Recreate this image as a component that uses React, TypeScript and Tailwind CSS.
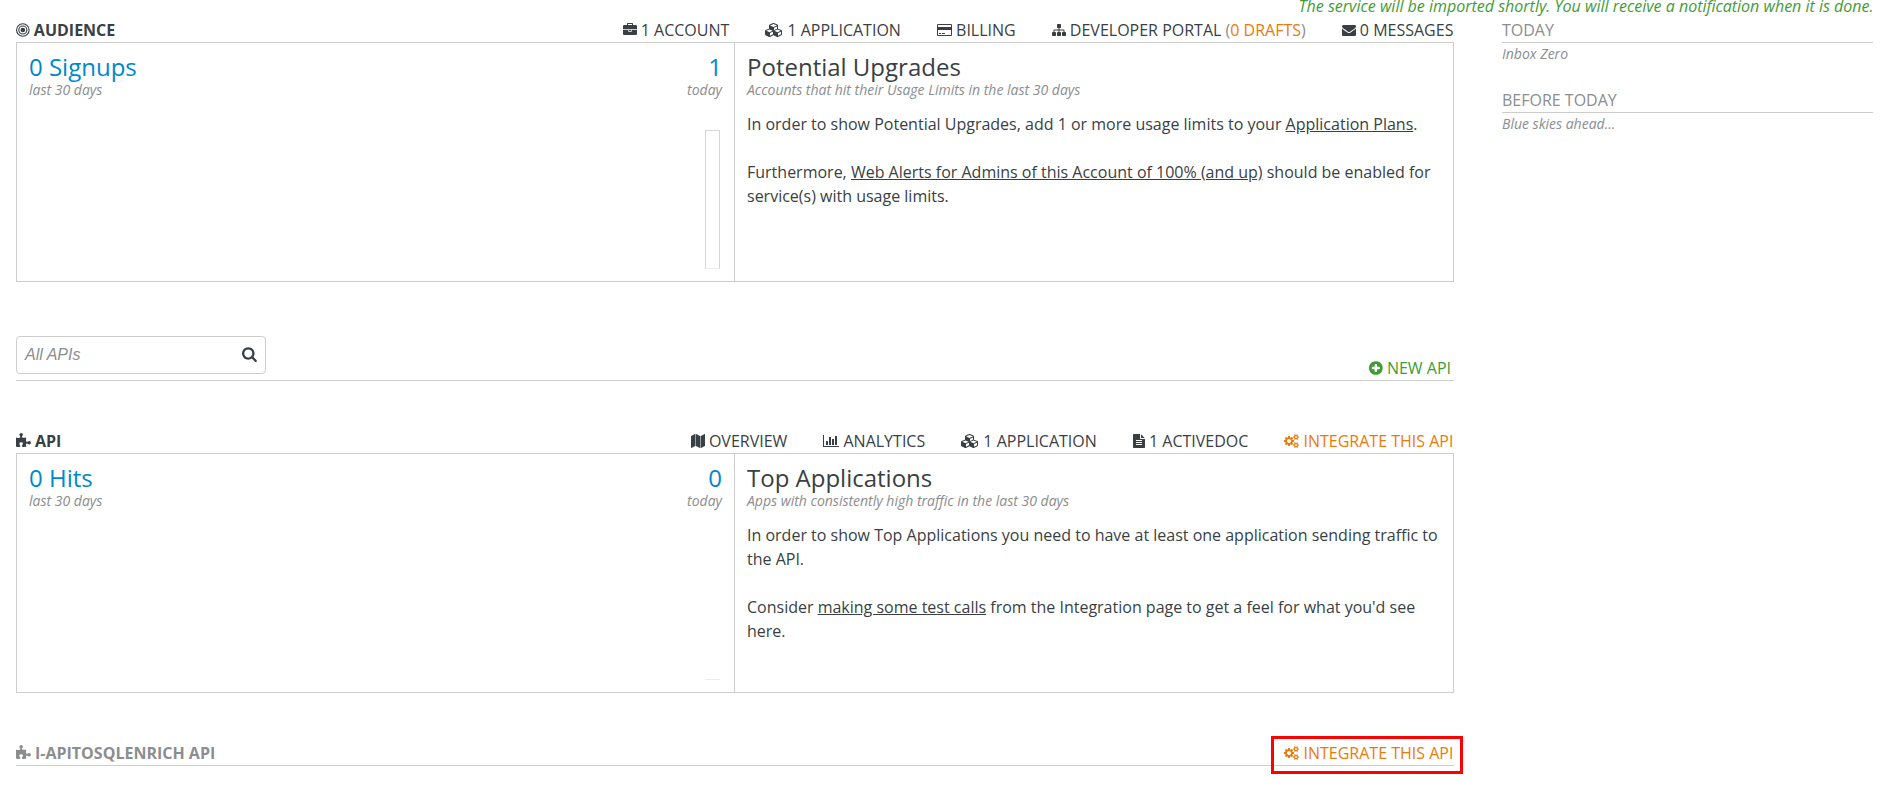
import type { ReactNode } from "react";

type Glyph = { w: number; d: string };

const glyphs: Record<string, Glyph> = {
  briefcase: {
    w: 1792,
    d: "M640 256h512v-128h-512v128zm1152 640v480q0 66-47 113t-113 47h-1472q-66 0-113-47t-47-113v-480h672v160q0 26 19 45t45 19h320q26 0 45-19t19-45v-160h672zm-768 0v128h-256v-128h256zm768-480v384h-1792v-384q0-66 47-113t113-47h352v-160q0-40 28-68t68-28h576q40 0 68 28t28 68v160h352q66 0 113 47t47 113z",
  },
  cubes: {
    w: 2304,
    d: "M640 1632l384-192v-314l-384 164v342zm-64-454l404-173-404-173-404 173zm1088 454l384-192v-314l-384 164v342zm-64-454l404-173-404-173-404 173zm-448-293l384-165v-266l-384 164v267zm-64-379l441-189-441-189-441 189zm1088 518v416q0 36-19 67t-52 47l-448 224q-25 14-57 14t-57-14l-448-224q-4-2-7-4-2 2-7 4l-448 224q-25 14-57 14t-57-14l-448-224q-33-16-52-47t-19-67v-416q0-38 21.5-70t56.5-48l434-186v-400q0-38 21.5-70t56.5-48l448-192q23-10 50-10t50 10l448 192q35 16 56.5 48t21.5 70v400l434 186q36 16 57 48t21 70z",
  },
  card: {
    w: 1920,
    d: "M1760 128q66 0 113 47t47 113v1216q0 66-47 113t-113 47h-1600q-66 0-113-47t-47-113v-1216q0-66 47-113t113-47h1600zm-1600 128q-13 0-22.5 9.5t-9.5 22.5v224h1664v-224q0-13-9.5-22.5t-22.5-9.5h-1600zm1600 1280q13 0 22.5-9.5t9.5-22.5v-608h-1664v608q0 13 9.5 22.5t22.5 9.5h1600zM256 1408v-128h256v128h-256zm384 0v-128h384v128h-384z",
  },
  sitemap: {
    w: 1792,
    d: "M1792 1248v320q0 40-28 68t-68 28h-320q-40 0-68-28t-28-68v-320q0-40 28-68t68-28h96v-192h-512v192h96q40 0 68 28t28 68v320q0 40-28 68t-68 28h-320q-40 0-68-28t-28-68v-320q0-40 28-68t68-28h96v-192h-512v192h96q40 0 68 28t28 68v320q0 40-28 68t-68 28h-320q-40 0-68-28t-28-68v-320q0-40 28-68t68-28h96v-192q0-52 38-90t90-38h512v-192h-96q-40 0-68-28t-28-68v-320q0-40 28-68t68-28h320q40 0 68 28t28 68v320q0 40-28 68t-68 28h-96v192h512q52 0 90 38t38 90v192h96q40 0 68 28t28 68z",
  },
  envelope: {
    w: 1792,
    d: "M1792 710v794q0 66-47 113t-113 47h-1472q-66 0-113-47t-47-113v-794q44 49 101 87 362 246 497 345 57 42 92.5 65.5t94.5 48 110 24.5h2q51 0 110-24.5t94.5-48 92.5-65.5q170-123 498-345 57-39 100-87zm0-294q0 79-49 151t-122 123q-376 261-468 325-10 7-42.5 31t-54 38-52 32.5-57.5 27-50 9h-2q-23 0-50-9t-57.5-27-52-32.5-54-38-42.5-31q-91-64-262-182.5t-205-142.5q-62-42-117-115.5t-55-136.5q0-78 41.5-130t118.5-52h1472q65 0 112.5 47t47.5 113z",
  },
  map: {
    w: 1792,
    d: "M512 0q13 0 22.5 9.5t9.5 22.5v1472q0 20-17 28l-480 256q-7 4-15 4-13 0-22.5-9.5t-9.5-22.5v-1472q0-20 17-28l480-256q7-4 15-4zm1248 0q13 0 22.5 9.5t9.5 22.5v1472q0 20-17 28l-480 256q-7 4-15 4-13 0-22.5-9.5t-9.5-22.5v-1472q0-20 17-28l480-256q7-4 15-4zm-1120 0q8 0 14 3l512 256q18 10 18 29v1472q0 13-9.5 22.5t-22.5 9.5q-8 0-14-3l-512-256q-18-10-18-29v-1472q0-13 9.5-22.5t22.5-9.5z",
  },
  chart: {
    w: 2048,
    d: "M640 896v512h-256v-512h256zm384-512v1024h-256v-1024h256zm1024 1152v128h-2048v-1536h128v1408h1920zm-640-896v768h-256v-768h256zm384-384v1152h-256v-1152h256z",
  },
  file: {
    w: 1536,
    d: "M1024 512v-472q22 14 36 28l408 408q14 14 28 36h-472zm-128 32q0 40 28 68t68 28h544v1056q0 40-28 68t-68 28h-1344q-40 0-68-28t-28-68v-1600q0-40 28-68t68-28h800v544zM384 800v64q0 32 32 32h704q32 0 32-32v-64q0-32-32-32h-704q-32 0-32 32zM384 1056v64q0 32 32 32h704q32 0 32-32v-64q0-32-32-32h-704q-32 0-32 32zM384 1312v64q0 32 32 32h704q32 0 32-32v-64q0-32-32-32h-704q-32 0-32 32z",
  },
  cogs: {
    w: 1920,
    d: "M896 896q0-106-75-181t-181-75-181 75-75 181 75 181 181 75 181-75 75-181zm768 512q0-52-38-90t-90-38-90 38-38 90q0 53 37.5 90.5t90.5 37.5 90.5-37.5 37.5-90.5zm0-1024q0-52-38-90t-90-38-90 38-38 90q0 53 37.5 90.5t90.5 37.5 90.5-37.5 37.5-90.5zm-384 421v185q0 10-7 19.5t-16 10.5l-155 24q-11 35-32 76 34 48 90 115 7 11 7 20 0 12-7 19-23 30-82.5 89.5t-78.5 59.5q-11 0-21-7l-115-90q-37 19-77 31-11 108-23 155-7 24-30 24h-186q-11 0-20-7.5t-10-17.5l-23-153q-34-10-75-31l-118 89q-7 7-20 7-11 0-21-8-144-133-144-160 0-9 7-19 10-14 41-53t47-61q-23-44-35-82l-152-24q-10-1-17-9.5t-7-19.5v-185q0-10 7-19.5t16-10.5l155-24q11-35 32-76-34-48-90-115-7-11-7-20 0-12 7-20 22-30 82-89t79-59q11 0 21 7l115 90q34-18 77-32 11-108 23-154 7-24 30-24h186q11 0 20 7.5t10 17.5l23 153q34 10 75 31l118-89q8-7 20-7 11 0 21 8 144 133 144 160 0 8-7 19-12 16-42 54t-45 60q23 48 34 82l152 23q10 2 17 10.5t7 19.5zm640 533v140q0 16-149 31-12 27-30 52 51 113 51 138 0 4-4 7-122 71-124 71-8 0-46-47t-52-68q-20 2-30 2t-30-2q-14 21-52 68t-46 47q-2 0-124-71-4-3-4-7 0-25 51-138-18-25-30-52-149-15-149-31v-140q0-16 149-31 13-29 30-52-51-113-51-138 0-4 4-7 4-2 35-20t59-34 30-16q8 0 46 46.5t52 67.5q20-2 30-2t30 2q51-71 92-112l6-2q4 0 124 70 4 3 4 7 0 25-51 138 17 23 30 52 149 15 149 31zm0-1024v140q0 16-149 31-12 27-30 52 51 113 51 138 0 4-4 7-122 71-124 71-8 0-46-47t-52-68q-20 2-30 2t-30-2q-14 21-52 68t-46 47q-2 0-124-71-4-3-4-7 0-25 51-138-18-25-30-52-149-15-149-31v-140q0-16 149-31 13-29 30-52-51-113-51-138 0-4 4-7 4-2 35-20t59-34 30-16q8 0 46 46.5t52 67.5q20-2 30-2t30 2q51-71 92-112l6-2q4 0 124 70 4 3 4 7 0 25-51 138 17 23 30 52 149 15 149 31z",
  },
  puzzle: {
    w: 1664,
    d: "M1664 1098q0 81-44.5 135t-123.5 54q-41 0-77.5-17.5t-59-38-56.5-38-71-17.5q-110 0-110 124 0 39 16 115t15 115v5q-22 0-33 1-34 3-97.5 11.5t-115.5 13.5-98 5q-61 0-103-26.5t-42-83.5q0-37 17.5-71t38-56.5 38-59 17.5-77.5q0-79-54-123.5t-135-44.5q-84 0-143 45.5t-59 127.5q0 43 15 83t33.5 64.5 33.5 53 15 50.5q0 45-46 89-37 35-117 35-95 0-245-24-9-2-27.5-4t-27.5-4l-13-2q-1 0-3-1-2 0-2-1v-1024q2 1 17.5 3.5t34 5 21.5 3.5q150 24 245 24 80 0 117-35 46-44 46-89 0-22-15-50.5t-33.5-53-33.5-64.5-15-83q0-82 59-127.5t144-45.5q80 0 134 44.5t54 123.5q0 41-17.5 77.5t-38 59-38 56.5-17.5 71q0 57 42 83.5t103 26.5q64 0 180-15t163-17v2q-1 2-3.5 17.5t-5 34-3.5 21.5q-24 150-24 245 0 80 35 117 44 46 89 46 22 0 50.5-15t53-33.5 64.5-33.5 83-15q82 0 127.5 59t45.5 143z",
  },
  bullseye: {
    w: 1536,
    d: "M512 896a256 256 0 1 0 512 0a256 256 0 1 0 -512 0zM384 896a384 384 0 1 0 768 0a384 384 0 1 0 -768 0zM256 896a512 512 0 1 0 1024 0a512 512 0 1 0 -1024 0zM128 896a640 640 0 1 0 1280 0a640 640 0 1 0 -1280 0zM0 896a768 768 0 1 0 1536 0a768 768 0 1 0 -1536 0z",
  },
  plus: {
    w: 1536,
    d: "M1216 960v-128q0-26-19-45t-45-19h-256v-256q0-26-19-45t-45-19h-128q-26 0-45 19t-19 45v256h-256q-26 0-45 19t-19 45v128q0 26 19 45t45 19h256v256q0 26 19 45t45 19h128q26 0 45-19t19-45v-256h256q26 0 45-19t19-45zm320-64q0 209-103 385.5t-279.5 279.5-385.5 103-385.5-103-279.5-279.5-103-385.5 103-385.5 279.5-279.5 385.5-103 385.5 103 279.5 279.5 103 385.5z",
  },
  search: {
    w: 1664,
    d: "M1152 832q0-185-131.5-316.5t-316.5-131.5-316.5 131.5-131.5 316.5 131.5 316.5 316.5 131.5 316.5-131.5 131.5-316.5zm512 832q0 52-38 90t-90 38q-54 0-90-38l-343-342q-179 124-399 124-143 0-273.5-55.5t-225-150-150-225-55.5-273.5 55.5-273.5 150-225 225-150 273.5-55.5 273.5 55.5 225 150 150 225 55.5 273.5q0 220-124 399l343 343q37 37 37 90z",
  },
};

function Icon({ name, large = false, className = "" }: { name: string; large?: boolean; className?: string }) {
  const { w, d } = glyphs[name];
  const size = large ? 16 : 14;
  return (
    <svg
      className={`inline-block overflow-visible ${large ? "align-[-2px]" : "align-[-1px]"} ${className}`}
      width={(w / 1792) * size}
      height={size}
      viewBox={`0 0 ${w} 1792`}
      fill="currentColor"
      fillRule="evenodd"
    >
      <path d={d} />
    </svg>
  );
}

function NavItem({ icon, children, className = "" }: { icon: string; children: ReactNode; className?: string }) {
  return (
    <a className={`whitespace-nowrap ${className}`}>
      <Icon name={icon} /> {children}
    </a>
  );
}

function Header({ icon, title, muted = false, children }: { icon: string; title: string; muted?: boolean; children: ReactNode }) {
  return (
    <header className="flex h-6 justify-between">
      <h2 className={`font-bold ${muted ? "text-[#8b8d8f]" : ""}`}>
        <Icon name={icon} large /> {title}
      </h2>
      <nav className="flex gap-9 pr-[0.6px]">{children}</nav>
    </header>
  );
}

function Panel({ total, today, chart, title, subtitle, children }: {
  total: string;
  today: string;
  chart: ReactNode;
  title: string;
  subtitle: string;
  children: ReactNode;
}) {
  return (
    <div className="flex h-60 border border-[#cdcdcd]">
      <div className="flex w-[718px] shrink-0 flex-col justify-between border-r border-[#cdcdcd] p-3">
        <div className="flex justify-between">
          <Stat value={total} label="last 30 days" />
          <div className="text-right">
            <Stat value={today} label="today" />
          </div>
        </div>
        <div className="mr-0.5 flex justify-end">{chart}</div>
      </div>
      <div className="flex-1 p-3 pr-2">
        <h3 className="text-2xl leading-6">{title}</h3>
        <p className="text-sm leading-[21px] text-[#8b8d8f] italic">{subtitle}</p>
        <div className="mt-3 flex flex-col gap-6">{children}</div>
      </div>
    </div>
  );
}

function Stat({ value, label }: { value: string; label: string }) {
  return (
    <div>
      <div className="text-2xl leading-6 text-[#0088ce]">{value}</div>
      <div className="text-sm leading-[21px] text-[#8b8d8f] italic">{label}</div>
    </div>
  );
}

function Messages({ title, children }: { title: string; children: ReactNode }) {
  return (
    <section>
      <h2 className="border-b border-[#cdcdcd] text-[#8b8d8f]">{title}</h2>
      <p className="text-sm leading-[21px] text-[#8b8d8f] italic">{children}</p>
    </section>
  );
}

export default function App() {
  return (
    <div className="flex h-[791px] w-[1894px] flex-col overflow-hidden bg-white font-['Open_Sans',sans-serif] text-base leading-6 text-[#393f44]">
      <p className="-mt-1.5 h-6 shrink-0 pr-[20.5px] text-right text-[#3f9c35] italic">
        The service will be imported shortly. You will receive a notification when it is done.
      </p>
      <div className="flex gap-12 pr-[21px] pl-4">
        <main className="w-[1438px] shrink-0">
          <section>
            <Header icon="bullseye" title="AUDIENCE">
              <NavItem icon="briefcase">1 ACCOUNT</NavItem>
              <NavItem icon="cubes">1 APPLICATION</NavItem>
              <NavItem icon="card">BILLING</NavItem>
              <NavItem icon="sitemap">
                DEVELOPER PORTAL <span className="text-[#8b8d8f]">(<span className="text-[#ec7a08]">0 DRAFTS</span>)</span>
              </NavItem>
              <NavItem icon="envelope">0 MESSAGES</NavItem>
            </Header>
            <Panel
              total="0 Signups"
              today="1"
              chart={<div className="h-[139px] w-[15px] border border-[#d6d6d6] border-b-[#ededed]" />}
              title="Potential Upgrades"
              subtitle="Accounts that hit their Usage Limits in the last 30 days"
            >
              <p>
                In order to show Potential Upgrades, add 1 or more usage limits to your <a className="underline">Application Plans</a>.
              </p>
              <p>
                Furthermore, <a className="underline">Web Alerts for Admins of this Account of 100% (and up)</a> should be enabled for service(s) with usage limits.
              </p>
            </Panel>
          </section>

          <div className="mt-[54px] flex h-[45px] items-start justify-between border-b border-[#cdcdcd]">
            <label className="flex h-[38px] w-[250px] items-center justify-between rounded border border-[#cdcdcd] pr-2 pl-2">
              <span className="font-['Liberation_Sans',sans-serif] text-[#8b8d8f] italic">All APIs</span>
              <Icon name="search" large className="mb-0.5" />
            </label>
            <a className="mt-5 pr-[3px] text-[#3f9c35]">
              <Icon name="plus" large /> NEW API
            </a>
          </div>

          <section className="mt-12">
            <Header icon="puzzle" title="API">
              <NavItem icon="map">OVERVIEW</NavItem>
              <NavItem icon="chart">ANALYTICS</NavItem>
              <NavItem icon="cubes">1 APPLICATION</NavItem>
              <NavItem icon="file">1 ACTIVEDOC</NavItem>
              <NavItem icon="cogs" className="text-[#ec7a08]">INTEGRATE THIS API</NavItem>
            </Header>
            <Panel
              total="0 Hits"
              today="0"
              chart={<div className="h-px w-[15px] bg-[#ededed]" />}
              title="Top Applications"
              subtitle="Apps with consistently high traffic in the last 30 days"
            >
              <p>In order to show Top Applications you need to have at least one application sending traffic to the API.</p>
              <p>
                Consider <a className="underline">making some test calls</a> from the Integration page to get a feel for what you'd see here.
              </p>
            </Panel>
          </section>

          <section className="relative mt-12 border-b border-[#cdcdcd]">
            <Header icon="puzzle" title="I-APITOSQLENRICH API" muted>
              <NavItem icon="cogs" className="text-[#ec7a08]">INTEGRATE THIS API</NavItem>
            </Header>
            <div className="absolute -top-[5px] -right-[9px] h-[38px] w-48 border-[3px] border-[#fe0000]" />
          </section>
        </main>
        <aside className="flex flex-1 flex-col gap-6">
          <Messages title="TODAY">Inbox Zero</Messages>
          <Messages title="BEFORE TODAY">Blue skies ahead...</Messages>
        </aside>
      </div>
    </div>
  );
}
